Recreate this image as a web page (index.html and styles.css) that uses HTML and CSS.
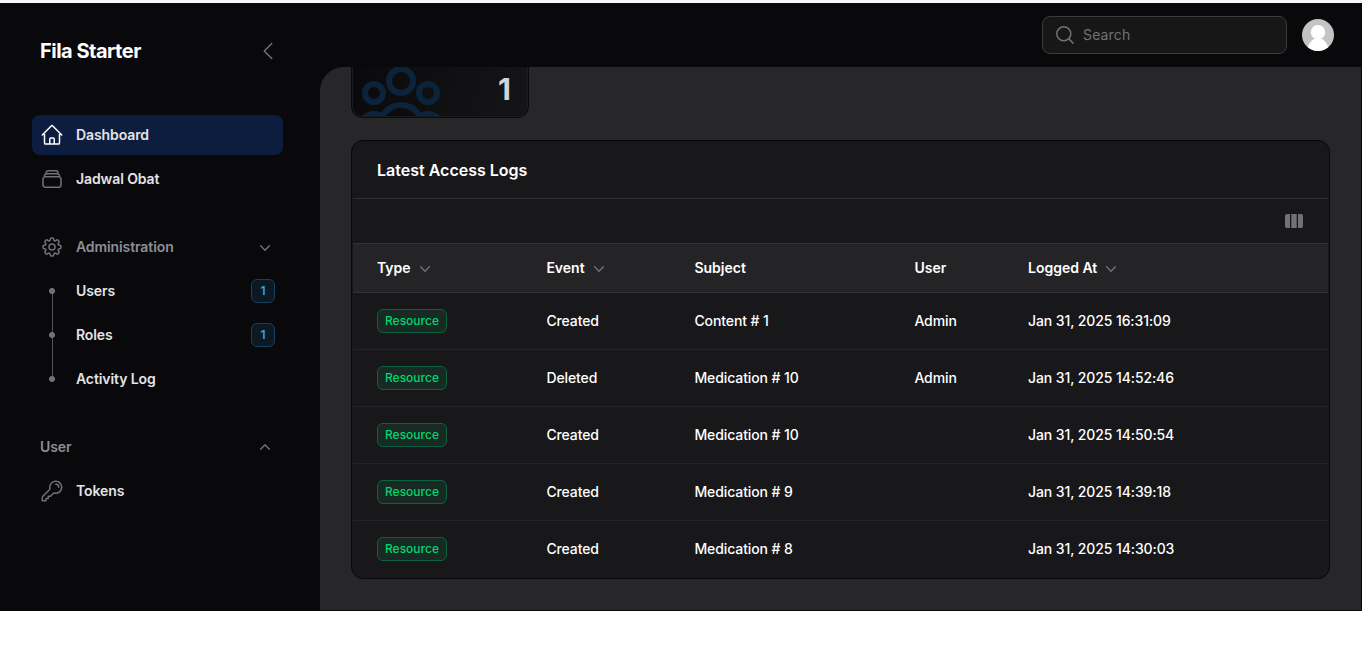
FILE: index.html
```html
<!DOCTYPE html>
<html lang="en">
<head>
<meta charset="utf-8">
<title>Fila Starter</title>
<link rel="stylesheet" href="styles.css">
</head>
<body>
<svg class="defs" width="0" height="0">
  <symbol id="down" viewBox="0 0 24 24"><path d="m19.5 8.25-7.5 7.5-7.5-7.5"/></symbol>
</svg>
<div class="app">
  <aside class="sidebar">
    <div class="brand">
      <span class="brand-name">Fila Starter</span>
      <svg class="icon collapse" viewBox="0 0 24 24"><path d="M15.75 19.5 8.25 12l7.5-7.5"/></svg>
    </div>
    <nav class="nav">
      <div class="group">
        <a class="item active"><svg class="icon" viewBox="0 0 24 24"><path d="m2.25 12 8.954-8.955c.44-.439 1.152-.439 1.591 0L21.75 12M4.5 9.75v10.125c0 .621.504 1.125 1.125 1.125H9.75v-4.875c0-.621.504-1.125 1.125-1.125h2.25c.621 0 1.125.504 1.125 1.125V21h4.125c.621 0 1.125-.504 1.125-1.125V9.75M8.25 21h8.25"/></svg><span>Dashboard</span></a>
        <a class="item"><svg class="icon" viewBox="0 0 24 24"><path d="M6 6.878V6a2.25 2.25 0 0 1 2.25-2.25h7.5A2.25 2.25 0 0 1 18 6v.878m-12 0c.235-.083.487-.128.75-.128h10.5c.263 0 .515.045.75.128m-12 0A2.25 2.25 0 0 0 4.5 9v.878m13.5-3A2.25 2.25 0 0 1 19.5 9v.878m0 0a2.246 2.246 0 0 0-.75-.128H5.25c-.263 0-.515.045-.75.128m15 0A2.25 2.25 0 0 1 21 12v6a2.25 2.25 0 0 1-2.25 2.25H5.25A2.25 2.25 0 0 1 3 18v-6c0-.98.626-1.813 1.5-2.122"/></svg><span>Jadwal Obat</span></a>
      </div>
      <div class="group">
        <div class="item heading"><svg class="icon" viewBox="0 0 24 24"><path d="M10.343 3.94c.09-.542.56-.94 1.11-.94h1.093c.55 0 1.02.398 1.11.94l.149.894c.07.424.384.764.78.93.398.164.855.142 1.205-.108l.737-.527a1.125 1.125 0 0 1 1.45.12l.773.774c.39.389.44 1.002.12 1.45l-.527.737c-.25.35-.272.806-.107 1.204.165.397.505.71.93.78l.893.15c.543.09.94.559.94 1.109v1.094c0 .55-.397 1.02-.94 1.11l-.894.149c-.424.07-.764.383-.929.78-.165.398-.143.854.107 1.204l.527.738c.32.447.269 1.06-.12 1.45l-.774.773a1.125 1.125 0 0 1-1.449.12l-.738-.527c-.35-.25-.806-.272-1.203-.107-.398.165-.71.505-.781.929l-.149.894c-.09.542-.56.94-1.11.94h-1.094c-.55 0-1.019-.398-1.11-.94l-.148-.894c-.071-.424-.384-.764-.781-.93-.398-.164-.854-.142-1.204.108l-.738.527c-.447.32-1.06.269-1.45-.12l-.773-.774a1.125 1.125 0 0 1-.12-1.45l.527-.737c.25-.35.272-.806.108-1.204-.165-.397-.506-.71-.93-.78l-.894-.15c-.542-.09-.94-.56-.94-1.109v-1.094c0-.55.398-1.02.94-1.11l.894-.149c.424-.07.765-.383.93-.78.165-.398.143-.854-.108-1.204l-.526-.738a1.125 1.125 0 0 1 .12-1.45l.773-.773a1.125 1.125 0 0 1 1.45-.12l.737.527c.35.25.807.272 1.204.107.397-.165.71-.505.78-.929l.15-.894Z"/><path d="M15 12a3 3 0 1 1-6 0 3 3 0 0 1 6 0Z"/></svg><span>Administration</span><svg class="caret"><use href="#down"/></svg></div>
        <a class="item"><i class="dot first"></i><span>Users</span><b class="count">1</b></a>
        <a class="item"><i class="dot"></i><span>Roles</span><b class="count">1</b></a>
        <a class="item"><i class="dot last"></i><span>Activity Log</span></a>
      </div>
      <div class="group">
        <div class="item heading"><span>User</span><svg class="caret up"><use href="#down"/></svg></div>
        <a class="item"><svg class="icon" viewBox="0 0 24 24"><path d="M15.75 5.25a3 3 0 0 1 3 3m3 0a6 6 0 0 1-7.029 5.912c-.563-.097-1.159.026-1.563.43L10.5 17.25H8.25v2.25H6v2.25H2.25v-2.818c0-.597.237-1.17.659-1.591l6.499-6.499c.404-.404.527-1 .43-1.563A6 6 0 1 1 21.75 8.25Z"/></svg><span>Tokens</span></a>
      </div>
    </nav>
  </aside>
  <div class="content">
    <header class="topbar">
      <div class="search"><svg class="icon" viewBox="0 0 24 24"><path d="m20.2 20.2-4.6-4.6"/><circle cx="10.8" cy="10.8" r="7"/></svg><span>Search</span></div>
      <svg class="avatar" viewBox="0 0 32 32"><circle cx="16" cy="13.2" r="7.2"/><path d="M5 32C6 25 10 19 16 19s10 6 11 13z"/></svg>
    </header>
    <main class="main">
      <section class="stat">
        <svg class="stat-icon" viewBox="0 0 88 49"><circle cx="49" cy="14" r="12"/><circle cx="22" cy="26" r="9"/><circle cx="76" cy="26" r="9"/><circle cx="22" cy="61" r="14"/><circle cx="76" cy="61" r="14"/><circle class="body" cx="49" cy="59" r="21"/></svg>
        <strong>1</strong>
      </section>
      <section class="card">
        <h2>Latest Access Logs</h2>
        <div class="tools"><svg class="columns" viewBox="0 0 18 14"><path d="M2 0h3v14H2a2 2 0 0 1-2-2V2a2 2 0 0 1 2-2ZM6.3 0h5.4v14H6.3ZM13 0h3a2 2 0 0 1 2 2v10a2 2 0 0 1-2 2h-3Z"/></svg></div>
        <div class="row head"><span>Type<svg class="caret"><use href="#down"/></svg></span><span>Event<svg class="caret"><use href="#down"/></svg></span><span>Subject</span><span>User</span><span>Logged At<svg class="caret"><use href="#down"/></svg></span></div>
        <div class="row"><span><em class="badge">Resource</em></span><span>Created</span><span>Content # 1</span><span>Admin</span><span>Jan 31, 2025 16:31:09</span></div>
        <div class="row"><span><em class="badge">Resource</em></span><span>Deleted</span><span>Medication # 10</span><span>Admin</span><span>Jan 31, 2025 14:52:46</span></div>
        <div class="row"><span><em class="badge">Resource</em></span><span>Created</span><span>Medication # 10</span><span></span><span>Jan 31, 2025 14:50:54</span></div>
        <div class="row"><span><em class="badge">Resource</em></span><span>Created</span><span>Medication # 9</span><span></span><span>Jan 31, 2025 14:39:18</span></div>
        <div class="row"><span><em class="badge">Resource</em></span><span>Created</span><span>Medication # 8</span><span></span><span>Jan 31, 2025 14:30:03</span></div>
      </section>
    </main>
  </div>
</div>
</body>
</html>
```
FILE: styles.css
```css
* { box-sizing: border-box; }
html { background: #fff; }
body { margin: 0; height: 647px; overflow: hidden; font: 500 14px/20px Inter, sans-serif; color: #fff; }
.defs { position: absolute; }
svg { fill: none; stroke: currentColor; stroke-width: 1.5; stroke-linecap: round; stroke-linejoin: round; flex: none; }
.icon { width: 24px; height: 24px; }
.app { display: flex; height: 611px; border-top: 3px solid #f6f7f8; background: #09090b; }

.sidebar { width: 320px; padding: 0 37px 0 32px; }
.brand { display: flex; align-items: center; justify-content: space-between; height: 96px; padding: 0 3px 0 8px; }
.brand-name { font-size: 20px; font-weight: 700; line-height: 28px; letter-spacing: -0.5px; }
.collapse { color: #71717a; }
.nav { display: flex; flex-direction: column; gap: 28px; padding-top: 16px; }
.group { display: flex; flex-direction: column; gap: 4px; }
.item { display: flex; align-items: center; gap: 12px; width: 251px; height: 40px; padding: 0 8px; border-radius: 8px; font-weight: 600; letter-spacing: -0.1px; color: #e4e4e7; }
.item .icon { color: #71717a; }
.item.active { background: #0c1d3f; }
.item.active .icon { color: #fff; }
.item.heading { color: #8e8e97; }
.caret { width: 14px; height: 14px; color: #71717a; stroke-width: 2.4; }
.item .caret { margin-left: auto; margin-right: 3px; }
.heading .caret { margin-top: 1px; }
.heading .caret.up { margin-top: -1px; }
.up { transform: rotate(180deg); }
.dot { align-self: stretch; width: 24px; background: radial-gradient(circle at 12px 20px, #71717a 2.6px, transparent 3.4px), linear-gradient(#52525b, #52525b) 12px 0 / 1px 100% no-repeat; margin-bottom: -4px; }
.dot.first { background: radial-gradient(circle at 12px 20px, #71717a 2.6px, transparent 3.4px), linear-gradient(#52525b, #52525b) 12px 20px / 1px 24px no-repeat; }
.dot.last { background: radial-gradient(circle at 12px 20px, #71717a 2.6px, transparent 3.4px), linear-gradient(#52525b, #52525b) 12px 0 / 1px 20px no-repeat; }
.count { margin-left: auto; width: 24px; height: 24px; border: 1px solid #173f5f; border-radius: 6px; background: #0c1923; color: #36a2eb; font-size: 12px; line-height: 22px; font-weight: 600; text-align: center; }

.content { flex: 1; display: flex; flex-direction: column; }
.topbar { display: flex; align-items: center; justify-content: flex-end; gap: 15px; height: 64px; padding-right: 28px; }
.search { display: flex; align-items: center; gap: 6px; width: 245px; height: 38px; padding-left: 10px; border: 1px solid #3b3b3d; border-radius: 8px; background: #171717; color: #71717a; font-weight: 400; letter-spacing: 0.15px; }
.search .icon { width: 24px; height: 24px; }
.avatar { width: 32px; height: 32px; border-radius: 50%; background: #c4c4c4; fill: #fff; stroke: none; }
.main { flex: 1; min-height: 0; margin: 0 1px 1px 0; padding: 0 31px; border-radius: 24px 0 0 0; background: #27272a; overflow: hidden; }
.stat { display: flex; justify-content: space-between; width: 178px; height: 51px; padding-right: 17px; border: solid #0a0a0b; border-width: 0 1px 1px; border-radius: 0 0 12px 12px; background: linear-gradient(100deg, #0a0a0c, #151517); box-shadow: inset 0 -1px #1d1d20, inset -1px 0 #1d1d20, inset 1px 0 #1d1d20; }
.stat-icon { width: 88px; height: 49px; color: #0b243c; stroke-width: 6; overflow: hidden; }
.stat-icon .body { fill: #0c0c0e; }
.stat strong { font-size: 30px; line-height: 45px; font-weight: 700; color: #d4d4d8; }

.card { width: 979px; margin-top: 22px; border: 1px solid #09090b; border-radius: 12px; background: #18181b; overflow: hidden; padding: 0 1px; height: 439px; }
h2 { height: 58px; margin: 0; border-bottom: 1px solid #2f2f32; padding-left: 24px; font-size: 16px; line-height: 59px; font-weight: 600; }
.tools { display: flex; align-items: center; justify-content: flex-end; height: 44px; padding-right: 25px; }
.columns { width: 18px; height: 14px; fill: #71717a; stroke: none; }
.row { display: grid; grid-template-columns: 169.4px 148px 220px 113.6px 1fr; align-items: center; height: 57px; padding-left: 24px; border-bottom: 1px solid #242427; letter-spacing: -0.1px; }
.row:last-child { height: 56px; border: 0; }
.row.head { height: 50px; border: solid #333336; border-width: 1px 0; background: #242427; font-weight: 600; letter-spacing: 0; }
.row > span { display: flex; align-items: center; }
.row .caret { margin-left: 7px; margin-top: 1px; }
.badge { height: 24px; padding: 0 7px; border: 1px solid #0c6341; border-radius: 6px; background: #172a23; color: #00d66f; font-size: 12px; line-height: 22px; font-style: normal; font-weight: 500; letter-spacing: 0; }
```
